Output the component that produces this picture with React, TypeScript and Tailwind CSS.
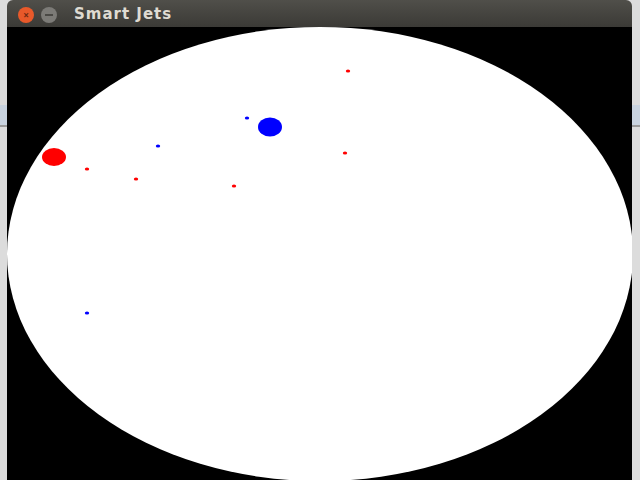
import React from "react";

type Dot = { x: number; y: number; rx: number; ry: number; color: string };

// positions in canvas coordinates (canvas origin at page x=7, y=27)
const dots: Dot[] = [
  { x: 47, y: 130, rx: 12, ry: 9, color: "#ff0000" },
  { x: 263, y: 100, rx: 12, ry: 9.5, color: "#0000ff" },
  { x: 240, y: 91, rx: 2.2, ry: 1.5, color: "#0000ff" },
  { x: 151, y: 119, rx: 2.2, ry: 1.5, color: "#0000ff" },
  { x: 80, y: 286, rx: 2.2, ry: 1.5, color: "#0000ff" },
  { x: 341, y: 44, rx: 2.2, ry: 1.5, color: "#ff0000" },
  { x: 338, y: 126, rx: 2.2, ry: 1.5, color: "#ff0000" },
  { x: 80, y: 142, rx: 2.2, ry: 1.5, color: "#ff0000" },
  { x: 129, y: 152, rx: 2.2, ry: 1.5, color: "#ff0000" },
  { x: 227, y: 159, rx: 2.2, ry: 1.5, color: "#ff0000" },
];

const SideStrip = ({ right }: { right?: boolean }) => (
  <div className={`flex flex-col bg-[#dcdcdc] ${right ? "w-[8px]" : "w-[7px]"}`}>
    <div className="h-[105px]" />
    <div className="h-[20px] bg-[#c9d3df]" />
    <div className="h-[2px] bg-[#9a9a9a]" />
    <div className="flex-1" />
  </div>
);

const TitleBar = () => (
  <div className="flex h-[27px] items-center gap-[7px] rounded-t-[6px] bg-gradient-to-b from-[#504f4a] to-[#3b3a36] pl-[11px] pt-[2px]">
    <div className="flex h-[16px] w-[16px] items-center justify-center rounded-full bg-[#e8592a] text-[10px] font-bold leading-none text-[#6e2a12]">
      ×
    </div>
    <div className="flex h-[16px] w-[16px] items-center justify-center rounded-full bg-[#7c7b77]">
      <div className="h-[2px] w-[8px] bg-[#4a4945]" />
    </div>
    <span className="ml-[10px] font-['DejaVu_Sans',sans-serif] text-[15px] font-bold tracking-[1px] text-[#dfdbd2]">
      Smart Jets
    </span>
  </div>
);

const Canvas = () => (
  <div className="flex-1 bg-black">
    <svg width="625" height="453" viewBox="0 0 625 453" className="block">
      <ellipse cx="313" cy="227" rx="313" ry="227" fill="#ffffff" />
      {dots.map((d, i) => (
        <ellipse key={i} cx={d.x} cy={d.y} rx={d.rx} ry={d.ry} fill={d.color} />
      ))}
    </svg>
  </div>
);

export default function App() {
  return (
    <div className="flex h-[480px] w-[640px] overflow-hidden bg-[#dcdcdc]">
      <SideStrip />
      <div className="flex w-[625px] flex-col">
        <TitleBar />
        <Canvas />
      </div>
      <SideStrip right />
    </div>
  );
}
